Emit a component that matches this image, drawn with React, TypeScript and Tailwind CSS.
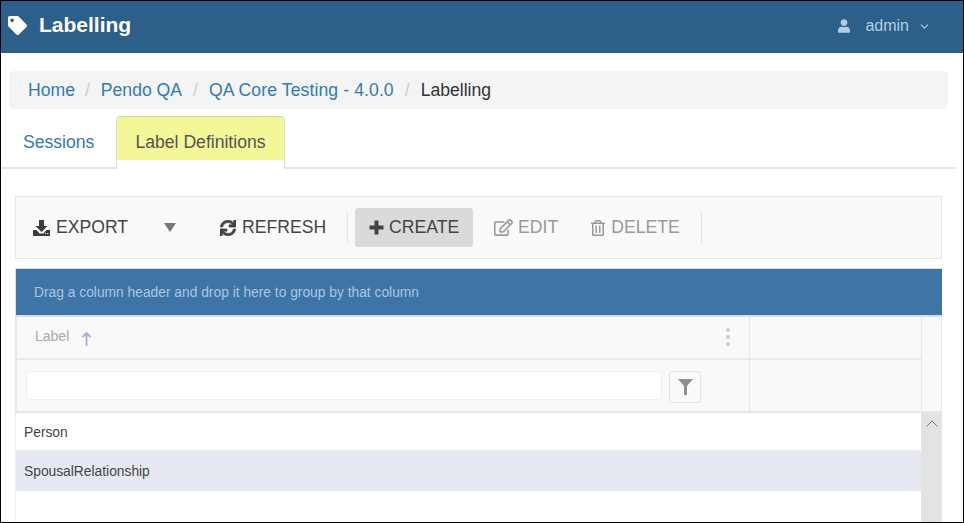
import { ChevronDown } from "lucide-react";
import { FaTag, FaUser, FaSync, FaRegEdit, FaRegTrashAlt } from "react-icons/fa";

function Sep() {
  return <span className="text-[#ccc] px-[11px]">/</span>;
}

export default function App() {
  return (
    <div className="w-[964px] h-[523px] overflow-hidden bg-white border border-black font-['Liberation_Sans',Arial,sans-serif] flex flex-col">
      <div className="h-[52px] bg-[#2c5f8a] flex items-center justify-between shrink-0">
        <div className="flex items-center pl-[7px] gap-[12px] pb-[4px]">
          <FaTag className="text-white w-[19px] h-[19px]" />
          <span className="text-white font-bold text-[21px]">Labelling</span>
        </div>
        <div className="flex items-center text-[#b3cde3] text-[16px] pr-[32px] pb-[2px]">
          <FaUser className="w-[12px] h-[14px] mr-[15px]" />
          <span>admin</span>
          <ChevronDown className="w-[13px] h-[13px] ml-[9px]" strokeWidth={2} />
        </div>
      </div>

      <div className="h-[38px] mt-[18px] ml-2 w-[939px] bg-[#f4f4f4] rounded-[5px] flex items-center pl-[19px] text-[17.6px] shrink-0">
        <span className="text-[#337ab7] mr-[-1px]">Home</span>
        <Sep />
        <span className="text-[#337ab7]">Pendo QA</span>
        <Sep />
        <span className="text-[#337ab7] tracking-[0.1px]">QA Core Testing - 4.0.0</span>
        <Sep />
        <span className="text-[#333]">Labelling</span>
      </div>

      <div className="h-[53px] mt-[7px] ml-px w-[953px] border-b-2 border-[#e3e3e3] flex items-end text-[17.6px] shrink-0">
        <div className="h-[51px] w-[114px] pl-[21px] pt-[2px] flex items-center text-[#337ab7]">Sessions</div>
        <div className="h-[53px] w-[169px] -mb-[2px] bg-white border border-[#ddd] border-t-[#d8d88a] border-b-0 rounded-t-[4px]">
          <div className="h-[43px] pt-[8px] bg-[#f3f798] rounded-t-[3px] flex items-center justify-center text-[#555]">Label Definitions</div>
        </div>
      </div>

      <div className="ml-[14px] mt-[27px] w-[927px] h-[63px] bg-[#f9f9f9] border border-[#e6e6e6] flex items-center text-[17.6px] text-[#444] shrink-0">
        <svg viewBox="0 0 17 16" className="ml-[17px] w-[17px] h-[16px]" fill="#3c3c3c">
          <path d="M6 0h5v6h3.5L8.5 12 2.5 6H6z" />
          <path d="M0 10h3.5l3 3.5h4l3-3.5H17v6H0z" />
          <rect x="12" y="13" width="1.2" height="1.2" fill="#dddddd" />
          <rect x="14.2" y="13" width="1.2" height="1.2" fill="#dddddd" />
        </svg>
        <span className="ml-[6px]">EXPORT</span>
        <span className="ml-[36px] w-0 h-0 border-x-[6px] border-x-transparent border-t-[9px] border-t-[#777]" />
        <FaSync className="ml-[44px] w-[16px] h-[16px]" stroke="currentColor" strokeWidth={25} />
        <span className="ml-[6px]">REFRESH</span>
        <span className="ml-[21px] w-px h-[31px] bg-[#e3e3e3]" />
        <div className="ml-[7px] w-[118px] h-[39px] bg-[#dadada] rounded-[3px] flex items-center pl-[14px]">
          <svg viewBox="0 0 15 15" className="w-[15px] h-[15px]" fill="currentColor">
            <path d="M5.5 0.5h4v5h5v4h-5v5h-4v-5h-5v-4h5z" />
          </svg>
          <span className="ml-[5px]">CREATE</span>
        </div>
        <FaRegEdit className="ml-[21px] w-[19px] h-[17px] text-[#999]" />
        <span className="ml-[5px] text-[#999]">EDIT</span>
        <FaRegTrashAlt className="ml-[33px] w-[14px] h-[16px] text-[#999]" />
        <span className="ml-[6px] text-[#999]">DELETE</span>
        <span className="ml-[21px] w-px h-[31px] bg-[#e3e3e3]" />
      </div>

      <div className="ml-[14px] mt-[9px] w-[927px] flex-1 min-h-0 flex flex-col">
        <div className="h-[49px] pt-[2px] bg-[#3f74a7] border-t border-l border-[#dcdcdc] border-b-2 border-b-[#d6dde3] flex items-center pl-[18px] text-[13.8px] text-[#aac6e0] shrink-0">
          Drag a column header and drop it here to group by that column
        </div>

        <div className="flex shrink-0 border-b-2 border-[#e6e6e6] bg-[#f9f9f9] border-l-2 border-r">
          <div className="flex-1 flex flex-col">
            <div className="flex h-[43px] border-b-2 border-[#e9e9e9]">
              <div className="w-[733px] border-r border-[#e6e6e6] flex items-center pl-[18px] relative">
                <span className="text-[14px] text-[#a8a8a8] pb-[2px]">Label</span>
                <svg viewBox="0 0 11 15" className="ml-[12px] w-[11px] h-[15px] mt-[2px]" fill="none" stroke="#b0a8dc" strokeWidth="1.8">
                  <path d="M5.5 15V2M1.5 6l4-4 4 4" />
                </svg>
                <div className="absolute right-[19px] top-[11px] flex flex-col gap-[3px]">
                  <span className="w-[4px] h-[4px] rounded-full bg-[#ccc]" />
                  <span className="w-[4px] h-[4px] rounded-full bg-[#ccc]" />
                  <span className="w-[4px] h-[4px] rounded-full bg-[#ccc]" />
                </div>
              </div>
              <div className="flex-1" />
            </div>
            <div className="flex h-[51px]">
              <div className="w-[733px] border-r border-[#e6e6e6] flex items-start pl-[9px] pt-[11px]">
                <div className="w-[636px] h-[29px] bg-white border border-[#eee] rounded-[3px]" />
                <div className="ml-[7px] w-[32px] h-[32px] border border-[#e3e3e3] rounded-[3px] flex items-center justify-center">
                  <svg viewBox="0 0 15 16" className="w-[15px] h-[16px]" fill="#8f8f8f">
                    <path d="M0 0h15L9 7v9H6V7z" />
                  </svg>
                </div>
              </div>
              <div className="flex-1" />
            </div>
          </div>
          <div className="w-[20px] border-l border-[#e6e6e6]" />
        </div>

        <div className="flex flex-1 min-h-0">
          <div className="flex-1 text-[13.8px] text-[#444] border-l border-[#eee]">
            <div className="h-[38px] pt-[3px] flex items-center pl-[8px] border-b border-[#eee]">Person</div>
            <div className="h-[40px] pt-[2px] flex items-center pl-[8px] bg-[#e6e9f1]">SpousalRelationship</div>
          </div>
          <div className="w-[21px] bg-[#e3e3e3] flex justify-center pt-[7px]">
            <svg viewBox="0 0 12 7" className="w-[12px] h-[7px]" fill="none" stroke="#777" strokeWidth="1">
              <path d="M0.5 6.5L6 1l5.5 5.5" />
            </svg>
          </div>
        </div>
      </div>
    </div>
  );
}
